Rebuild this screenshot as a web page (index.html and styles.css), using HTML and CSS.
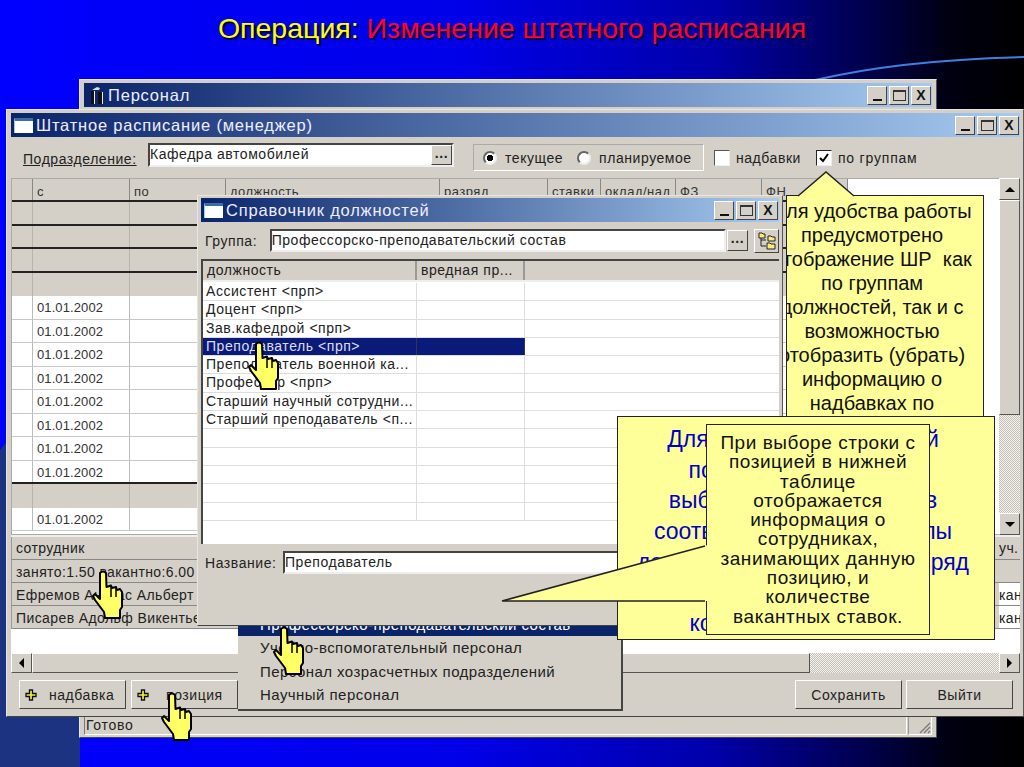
FILE: index.html
```html
<!DOCTYPE html>
<html lang="ru">
<head>
<meta charset="utf-8">
<title>Операция: Изменение штатного расписания</title>
<link rel="stylesheet" href="styles.css">
</head>
<body>
<div class="slide">
  <svg class="decor" width="1024" height="767" viewBox="0 0 1024 767">
    <path d="M0 450 Q4 445 8 440 L80 700 L80 767 L0 767 Z" fill="#1b3380"/>
    <path d="M815 80 Q900 60 1024 57" fill="none" stroke="#3f7fe0" stroke-width="2"/>
  </svg>
  <h1 class="slide-title"><span class="t-yellow">Операция:</span> <span class="t-red">Изменение штатного расписания</span></h1>

  <section class="win win-personal">
    <header class="titlebar">
      <svg class="ico-personal" width="16" height="17" viewBox="0 0 16 17"><path d="M2 4h3v13H2zM9 5h4v12H9z" fill="#111"/><path d="M5 4h1v13H5zM13 5h1v12h-1z" fill="#eee"/><path d="M3 3L8 0l3 1-1 2H6z" fill="#ddd"/></svg>
      <span class="titlebar-text">Персонал</span>
      <div class="winbtns">
        <span class="winbtn"><i class="g-min"></i></span><span class="winbtn"><i class="g-max"></i></span><span class="winbtn winbtn-close">X</span>
      </div>
    </header>
    <div class="personal-body"></div>
    <footer class="statusbar">
      <div class="status-main">Готово</div>
      <div class="status-grip"><svg width="12" height="12" viewBox="0 0 12 12"><path d="M1 11L11 1M5 11l6-6M9 11l2-2" stroke="#777" stroke-width="1.2"/></svg></div>
    </footer>
  </section>

  <section class="win win-shtat">
    <header class="titlebar">
      <span class="ico-win"></span>
      <span class="titlebar-text">Штатное расписание (менеджер)</span>
      <div class="winbtns">
        <span class="winbtn"><i class="g-min"></i></span><span class="winbtn"><i class="g-max"></i></span><span class="winbtn winbtn-close">X</span>
      </div>
    </header>
    <div class="toolbar">
      <label class="lbl-sub">Подразделение:</label>
      <div class="field field-sub"><span class="field-text">Кафедра автомобилей</span><span class="dots">...</span></div>
      <div class="radio-box">
        <span class="radio radio-on"></span><span class="opt">текущее</span>
        <span class="radio"></span><span class="opt">планируемое</span>
      </div>
      <span class="check"></span><span class="opt opt-nad">надбавки</span>
      <span class="check check-on"><svg width="12" height="12" viewBox="0 0 12 12"><path d="M2 6l3 3 5-7" fill="none" stroke="#000" stroke-width="2"/></svg></span><span class="opt opt-grp">по группам</span>
    </div>

    <div class="main-area">
      <div class="main-grid">
        <div class="mrow mrow-head"><span></span><span>с</span><span>по</span><span>должность</span><span>разряд</span><span>ставки</span><span>оклад/над</span><span>ФЗ</span><span>ФН</span></div>
        <div class="mrow mrow-group"><span></span><span></span><span></span><span></span><span></span><span></span><span></span><span></span><span></span></div>
        <div class="mrow mrow-group"><span></span><span></span><span></span><span></span><span></span><span></span><span></span><span></span><span></span></div>
        <div class="mrow mrow-group"><span></span><span></span><span></span><span></span><span></span><span></span><span></span><span></span><span></span></div>
        <div class="mrow mrow-group mrow-flat"><span></span><span></span><span></span><span></span><span></span><span></span><span></span><span></span><span></span></div>
        <div class="mrow"><span></span><span>01.01.2002</span><span></span><span></span><span></span><span></span><span></span><span></span><span></span></div>
        <div class="mrow"><span></span><span>01.01.2002</span><span></span><span></span><span></span><span></span><span></span><span></span><span></span></div>
        <div class="mrow"><span></span><span>01.01.2002</span><span></span><span></span><span></span><span></span><span></span><span></span><span></span></div>
        <div class="mrow"><span></span><span>01.01.2002</span><span></span><span></span><span></span><span></span><span></span><span></span><span></span></div>
        <div class="mrow"><span></span><span>01.01.2002</span><span></span><span></span><span></span><span></span><span></span><span></span><span></span></div>
        <div class="mrow"><span></span><span>01.01.2002</span><span></span><span></span><span></span><span></span><span></span><span></span><span></span></div>
        <div class="mrow"><span></span><span>01.01.2002</span><span></span><span></span><span></span><span></span><span></span><span></span><span></span></div>
        <div class="mrow mrow-last"><span></span><span>01.01.2002</span><span></span><span></span><span></span><span></span><span></span><span></span><span></span></div>
        <div class="mrow mrow-group mrow-flat"><span></span><span></span><span></span><span></span><span></span><span></span><span></span><span></span><span></span></div>
        <div class="mrow"><span></span><span>01.01.2002</span><span></span><span></span><span></span><span></span><span></span><span></span><span></span></div>
      </div>
      <div class="vscroll">
        <span class="sbtn"><i class="arr-up"></i></span>
        <span class="vthumb"></span>
        <span class="dither"></span>
        <span class="sbtn"><i class="arr-down"></i></span>
      </div>
    </div>

    <div class="detail">
      <div class="drow drow-gray"><span class="d-name">сотрудник</span><span class="d-end">уч.</span></div>
      <div class="drow drow-gray"><span class="d-name">занято:1.50 вакантно:6.00</span><span class="d-end"></span></div>
      <div class="drow"><span class="d-name">Ефремов Анатас Альберт</span><span class="d-end d-white">кан</span></div>
      <div class="drow"><span class="d-name">Писарев Адольф Викентьевич</span><span class="d-end d-white">кан</span></div>
      <div class="d-fill"></div>
      <div class="hscroll">
        <span class="sbtn"><i class="arr-left"></i></span>
        <span class="hthumb"></span>
        <span class="dither"></span>
        <span class="sbtn"><i class="arr-right"></i></span>
      </div>
    </div>

    <div class="actions">
      <button class="btn btn-plus"><svg width="12" height="12" viewBox="0 0 12 12"><path d="M4.500 1h3v3.500H11v3H7.500V11h-3V7.500H1v-3h3.500z" fill="#f0f040" stroke="#111" stroke-width="1.300"/></svg><span>надбавка</span></button>
      <button class="btn btn-plus"><svg width="12" height="12" viewBox="0 0 12 12"><path d="M4.500 1h3v3.500H11v3H7.500V11h-3V7.500H1v-3h3.500z" fill="#f0f040" stroke="#111" stroke-width="1.300"/></svg><span>позиция</span></button>
      <span class="spacer"></span>
      <button class="btn">Сохранить</button>
      <button class="btn">Выйти</button>
    </div>
  </section>

  <div class="dropdown">
    <div class="dd-item dd-sel">Профессорско-преподавательский состав</div>
    <div class="dd-item">Учебно-вспомогательный персонал</div>
    <div class="dd-item">Персонал хозрасчетных подразделений</div>
    <div class="dd-item">Научный персонал</div>
  </div>

  <svg class="tail tail-top" width="60" height="27" viewBox="0 0 60 27"><path d="M1 26L29 2 57 26" fill="#ffff99" stroke="#222" stroke-width="1.5"/></svg>
  <div class="note note-top">
    <p class="note-top-text">Для удобства работы<br>предусмотрено<br>отображение ШР&nbsp; как<br>по группам<br>должностей, так и с<br>возможностью<br>отобразить (убрать)<br>информацию о<br>надбавках по</p>
  </div>

  <section class="win win-dialog">
    <header class="titlebar">
      <span class="ico-win"></span>
      <span class="titlebar-text">Справочник должностей</span>
      <div class="winbtns">
        <span class="winbtn"><i class="g-min"></i></span><span class="winbtn"><i class="g-max"></i></span><span class="winbtn winbtn-close">X</span>
      </div>
    </header>
    <div class="group-row">
      <label class="lbl-group">Группа:</label>
      <div class="field field-group"><span class="field-text">Профессорско-преподавательский состав</span></div>
      <span class="sq-btn dots-btn">...</span>
      <span class="sq-btn tree-btn"><svg width="20" height="20" viewBox="0 0 20 20"><path d="M4 6v9h5M4 9h5" fill="none" stroke="#222"/><path d="M2 2h3l1 1h2v4H2z" fill="#ffe97a" stroke="#222"/><path d="M11 5h3l1 1h3v4h-7zM10 12h3l1 1h4v5h-8z" fill="#ffe97a" stroke="#222"/></svg></span>
    </div>
    <div class="pos-grid">
      <div class="prow prow-head"><span>должность</span><span>вредная пр...</span><span></span></div>
      <div class="prow"><span>Ассистент &lt;прп&gt;</span><span></span><span></span></div>
      <div class="prow"><span>Доцент &lt;прп&gt;</span><span></span><span></span></div>
      <div class="prow"><span>Зав.кафедрой &lt;прп&gt;</span><span></span><span></span></div>
      <div class="prow prow-sel"><span>Преподаватель &lt;прп&gt;</span><span></span><span></span></div>
      <div class="prow"><span>Преподаватель военной ка...</span><span></span><span></span></div>
      <div class="prow"><span>Профессор &lt;прп&gt;</span><span></span><span></span></div>
      <div class="prow"><span>Старший научный сотрудни...</span><span></span><span></span></div>
      <div class="prow"><span>Старший преподаватель &lt;п...</span><span></span><span></span></div>
      <div class="prow"><span></span><span></span><span></span></div>
      <div class="prow"><span></span><span></span><span></span></div>
      <div class="prow"><span></span><span></span><span></span></div>
      <div class="prow"><span></span><span></span><span></span></div>
      <div class="prow"><span></span><span></span><span></span></div>
    </div>
    <div class="name-row">
      <label class="lbl-name">Название:</label>
      <div class="field field-name"><span class="field-text">Преподаватель</span></div>
    </div>
  </section>

  <div class="note note-blue">
    <p class="note-blue-text">Для добавления штатной<br>позиции, необходимо<br>выбрать его должность в<br>соответствии с ними шкалы<br>должностей, а также их разряд<br>&nbsp;<br>количество их ставок</p>
  </div>

  <svg class="tail tail-side" width="212" height="62" viewBox="0 0 212 62"><path d="M211 2L5 58 211 58 211 2Z" fill="#ffff99"/><path d="M208 3L5 58 208 58" fill="none" stroke="#222" stroke-width="1.5"/></svg>
  <div class="note note-black">
    <p class="note-black-text">При выборе строки с<br>позицией в нижней<br>таблице<br>отображается<br>информация о<br>сотрудниках,<br>занимающих данную<br>позицию, и<br>количестве<br>вакантных ставок.</p>
  </div>
  <span class="tail-patch"></span>

  <svg class="hand hand-a" width="32" height="50" viewBox="0 0 32 50"><use href="#hand"/></svg>
  <svg class="hand hand-b" width="32" height="50" viewBox="0 0 32 50"><use href="#hand"/></svg>
  <svg class="hand hand-c" width="32" height="50" viewBox="0 0 32 50"><use href="#hand"/></svg>
  <svg class="hand hand-d" width="32" height="50" viewBox="0 0 32 50"><use href="#hand"/></svg>
  <svg class="defs" width="0" height="0"><defs><g id="hand"><path d="M8 3Q11 0 14 3L14.500 17 19 15.500 20 18 24 17 25 20 28 19 30 22 30 37 28 40 28 48 13 48 12 42 3 30 1 26 3 24 8 29Z" fill="#ffff66" stroke="#000" stroke-width="2" stroke-linejoin="round"/><path d="M19 16L19 27M24 18L24 27" stroke="#000" stroke-width="1.500" fill="none"/></g></defs></svg>
</div>
</body>
</html>
```

FILE: styles.css
```css
* { box-sizing: border-box; }
html, body { margin: 0; padding: 0; }
body { width: 1024px; height: 767px; overflow: hidden; font-family: "Liberation Sans", Arial, sans-serif; font-size: 14px; color: #222; }
p { margin: 0; }

.slide { position: relative; width: 1024px; height: 767px; overflow: hidden;
  background: linear-gradient(90deg, #0000ff 0%, #0000e8 45%, #0000a8 70%, #000050 84%, #000010 93%, #000 100%); }
.decor { position: absolute; left: 0; top: 0; }
.defs { position: absolute; }

.slide-title { position: absolute; left: 0; top: 10px; width: 1024px; margin: 0; text-align: center;
  font-size: 28.500px; line-height: 36px; font-weight: 400; text-shadow: 2px 2px 1px #000030; }
.t-yellow { color: #ffff00; }
.t-red { color: #ff0033; }

.win { position: absolute; display: flex; flex-direction: column; background: #d4d0c8; padding: 3px 4px 2px;
  border: 1px solid #e8e6e0; border-right-color: #555; border-bottom-color: #444; }
.win-personal { left: 79px; top: 79px; width: 858px; height: 659px; }
.win-shtat { left: 6px; top: 109px; width: 1018px; height: 608px; padding-right: 3px; }
.win-dialog { left: 197px; top: 195px; width: 586px; height: 431px; padding: 2px 3px 3px; }

.titlebar { display: flex; align-items: center; height: 24px; flex: none; background: linear-gradient(90deg, #0a246a, #a6caf0); color: #fff; padding-left: 3px; }
.titlebar-text { font-size: 16.500px; letter-spacing: .8px; color: #eef; margin-left: 3px; }
.ico-personal { margin-left: 2px; }
.ico-win { width: 19px; height: 15px; background: #fff; border-top: 3px solid #3a6ea5; border-left: 1px solid #9cf; flex: none; }
.winbtns { margin-left: auto; display: flex; gap: 2px; padding-right: 1px; }
.winbtn { width: 20px; height: 19px; background: #d4d0c8; display: flex; align-items: center; justify-content: center; font-size: 14px; font-weight: 700; color: #111;
  border: 1px solid; border-color: #fff #444 #444 #fff; }
.g-min { width: 9px; height: 2px; background: #111; margin-top: 9px; }
.g-max { width: 13px; height: 11px; border: 1px solid #333; border-top-width: 2px; }

.personal-body { flex: 1; }
.statusbar { display: flex; height: 22px; gap: 1px; flex: none; }
.status-main { flex: 1; border: 1px solid; border-color: #777 #fff #fff #777; padding: 3px 0 0 1px; font-size: 14px; letter-spacing: .7px; }
.status-grip { width: 24px; display: flex; align-items: flex-end; justify-content: flex-end; border: 1px solid; border-color: #999 #fff #fff #999; }

.toolbar { display: flex; align-items: center; height: 41px; flex: none; padding-left: 12px; letter-spacing: .55px; }
.lbl-sub { width: 125px; text-decoration: underline; margin-top: 2px; }
.field { background: #fff; border: 2px solid; border-color: #444 #eee #eee #444; display: flex; align-items: center; }
.field-sub { width: 306px; height: 24px; margin-bottom: 6px; }
.field-text { padding-left: 0; flex: 1; white-space: nowrap; overflow: hidden; letter-spacing: .55px; padding-bottom: 2px; }
.dots { width: 21px; height: 20px; background: #d4d0c8; border: 1px solid; border-color: #fff #444 #444 #fff; text-align: center; font-weight: 700; line-height: 14px; }
.radio-box { display: flex; align-items: center; width: 231px; height: 27px; margin-left: 19px; border: 1px solid; border-color: #aaa #fff #fff #aaa; padding-left: 9px; }
.radio { width: 14px; height: 14px; border-radius: 50%; background: #fff; border: 2px solid; border-color: #666 #eee #eee #666; flex: none; }
.radio-on { background: radial-gradient(circle, #000 0 3px, #fff 3.5px); }
.opt { margin: 0 14px 0 8px; white-space: nowrap; padding-top: 1px; }
.check { width: 16px; height: 16px; background: #fff; border: 1px solid; border-color: #555 #eee #eee #555; flex: none; margin-left: 10px; display: flex; align-items: center; justify-content: center; }
.opt-nad { margin: 0 15px 0 6px; }
.check-on { margin-left: 0; border-color: #222 #eee #eee #222; }
.opt-grp { margin: 0 0 0 6px; letter-spacing: .8px; }

.main-area { display: flex; height: 357px; flex: none; padding-left: 0; }
.main-grid { flex: 1; background: #fff; border: 1px solid #aaa; border-right: 0; overflow: hidden; font-size: 13px; }
.mrow { display: grid; grid-template-columns: 21px 97px 96px 214px 108px 53px 75px 86px 86px; width: 836px; height: 23.500px; border-bottom: 1px solid #c8c8c8; background: #fff; }
.mrow span { border-right: 1px solid #bbb; padding: 4px 0 0 4px; white-space: nowrap; overflow: hidden; letter-spacing: .1px; color: #333; line-height: 15px; }
.mrow-head, .mrow-group { background: #d4d0c8; border-bottom: 2px solid #222; }
.mrow-head { height: 23px; }
.mrow-head span { padding-top: 5px; letter-spacing: .5px; border-right: 1px solid #888; }
.mrow-group span { border-right-color: #b8b4ac; }
.mrow-flat { border-bottom: 0; }
.mrow-last { border-bottom: 2px solid #222; }
.vscroll { width: 21px; display: flex; flex-direction: column; flex: none; }
.sbtn { flex: none; width: 21px; height: 22px; background: #d4d0c8; border: 1px solid; border-color: #fff #555 #555 #fff; display: flex; align-items: center; justify-content: center; }
.vthumb { height: 215px; flex: none; background: #d4d0c8; border: 1px solid; border-color: #fff #555 #555 #fff; }
.dither { flex: 1; background: repeating-conic-gradient(#f4f2ee 0 25%, #c4c0b8 0 50%) 0 0 / 2px 2px; }
.arr-up, .arr-down, .arr-left, .arr-right { width: 0; height: 0; border: 5px solid transparent; }
.arr-up { border-bottom-color: #000; margin-top: -5px; }
.arr-down { border-top-color: #000; margin-top: 5px; }
.arr-left { border-right-color: #000; margin-left: -5px; }
.arr-right { border-left-color: #000; margin-left: 5px; }

.detail { display: flex; flex-direction: column; height: 138px; flex: none; background: #fff; border-top: 2px solid #eee; letter-spacing: .4px; }
.drow { display: flex; justify-content: space-between; height: 23px; flex: none; background: #d4d0c8; border-bottom: 1px solid #888; border-left: 1px solid #999; }
.d-name { width: 190px; padding: 3px 0 0 4px; white-space: nowrap; overflow: hidden; }
.d-end { width: 21px; padding: 3px 0 0 0; overflow: hidden; white-space: nowrap; }
.drow + .drow .d-name, .drow + .drow .d-end { padding-top: 4px; }
.d-white { background: #fff; }
.d-fill { flex: 1; }
.hscroll { display: flex; height: 20px; flex: none; }
.hscroll .sbtn { height: 20px; }
.hthumb { width: 778px; flex: none; background: #d4d0c8; border: 1px solid; border-color: #fff #555 #555 #fff; }

.actions { display: flex; align-items: flex-start; gap: 5px; padding: 7px 7px 0 8px; flex: 1; }
.btn { width: 107px; height: 29px; background: #d4d0c8; border: 1px solid; border-color: #fff #444 #444 #fff; font: 14px "Liberation Sans", Arial, sans-serif; letter-spacing: .55px; color: #222; padding: 0; display: flex; align-items: center; justify-content: center; }
.btn-plus { justify-content: flex-start; padding-left: 5px; }
.btn-plus span { margin-left: 12px; }
.btn-plus + .btn-plus span { margin-left: 17px; }
.spacer { flex: 1; }
.btn:last-child { margin-left: -1px; }

.dropdown { position: absolute; left: 238px; top: 613px; width: 385px; height: 98px; background: #d4d0c8; border-right: 2px solid #444; border-bottom: 2px solid #444; font-size: 15px; letter-spacing: .45px; }
.dd-item { height: 23.300px; line-height: 24px; padding-left: 22px; white-space: nowrap; color: #222; }
.dd-sel { background: #0a246a; color: #fff; }

.note { position: absolute; background: #ffff99; border: 1px solid #222; overflow: hidden; text-align: center; color: #000; }
.tail { position: absolute; }
.tail-top { left: 797px; top: 170px; z-index: 1; }
.note-top { left: 786px; top: 195px; width: 198px; height: 240px; }
.note-top-text { width: 228px; margin-left: -29px; padding-top: 3px; font-size: 20px; line-height: 24px; white-space: nowrap; color: #111; }
.note-blue { left: 617px; top: 416px; width: 378px; height: 224px; color: #0000cc; }
.note-blue-text { padding: 7px 0 0 0; margin-left: -6px; font-size: 23px; line-height: 30.700px; white-space: nowrap; }
.tail-side { left: 497px; top: 543px; z-index: 2; }
.note-black { left: 706px; top: 424px; width: 224px; height: 211px; z-index: 1; }
.note-black-text { padding-top: 8px; font-size: 19px; line-height: 19.300px; letter-spacing: .55px; white-space: nowrap; color: #111; }
.tail-patch { position: absolute; left: 705px; top: 546px; width: 3px; height: 52px; background: #ffff99; z-index: 3; }

.group-row { display: flex; align-items: center; height: 37px; flex: none; padding-left: 4px; letter-spacing: .55px; }
.lbl-group { width: 65px; }
.field-group { width: 459px; height: 23px; }
.sq-btn { flex: none; background: #d4d0c8; border: 1px solid; border-color: #fff #444 #444 #fff; display: flex; align-items: center; justify-content: center; }
.dots-btn { width: 21px; height: 21px; margin-left: 1px; font-weight: 700; padding-bottom: 6px; }
.tree-btn { width: 25px; height: 24px; margin-left: 6px; }
.pos-grid { flex: none; height: 285px; background: #fff; border-top: 2px solid #444; border-left: 2px solid #444; overflow: hidden; letter-spacing: .55px; }
.prow { display: grid; grid-template-columns: 214px 108px 1fr; height: 18.300px; border-bottom: 1px solid #ddd; }
.prow span { border-right: 1px solid #ddd; padding-left: 3px; line-height: 16px; white-space: nowrap; overflow: hidden; }
.prow span:last-child { border-right: 0; }
.prow-head { height: 21px; background: #d4d0c8; border-bottom: 2px solid #eee; margin-bottom: 1px; }
.prow-head span { padding: 1px 0 0 4px; border-right: 2px solid #999; }
.prow-sel { background: linear-gradient(90deg, #0a1a78 0 322px, #fff 322px); color: #dde; }
.prow-sel span { border-right-color: #335; outline: 0; }
.name-row { display: flex; align-items: center; padding: 7px 0 0 4px; letter-spacing: .55px; }
.lbl-name { width: 78px; }
.field-name { width: 340px; height: 23px; }

.hand { position: absolute; z-index: 5; }
.hand-a { left: 248px; top: 341px; }
.hand-b { left: 92px; top: 570px; }
.hand-c { left: 273px; top: 626px; }
.hand-d { left: 161px; top: 692px; }
```
